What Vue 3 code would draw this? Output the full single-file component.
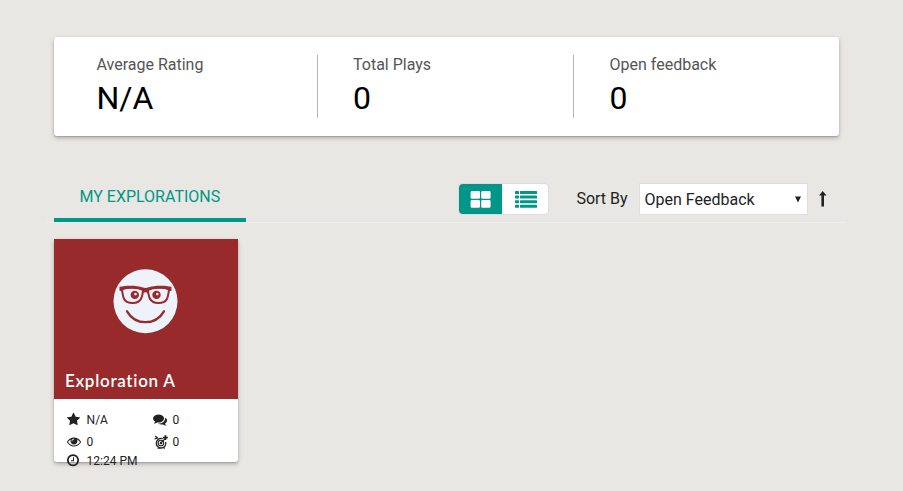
<script setup>
const stats = [
  { label: 'Average Rating', value: 'N/A' },
  { label: 'Total Plays', value: '0' },
  { label: 'Open feedback', value: '0' },
]
</script>

<template>
  <main class="dashboard">
    <section class="stats">
      <div v-for="s in stats" :key="s.label" class="stat">
        <div class="stat-label">{{ s.label }}</div>
        <div class="stat-value">{{ s.value }}</div>
      </div>
    </section>

    <nav class="toolbar">
      <div class="tab">MY EXPLORATIONS</div>
      <div class="view-toggle">
        <button class="view active" aria-label="Card view">
          <svg width="21" height="17" viewBox="0 0 21 17" fill="currentColor">
            <rect x=".6" width="9.4" height="7.8" rx="1.4" />
            <rect x="11.2" width="9.4" height="7.8" rx="1.4" />
            <rect x=".6" y="9" width="9.4" height="7.8" rx="1.4" />
            <rect x="11.2" y="9" width="9.4" height="7.8" rx="1.4" />
          </svg>
        </button>
        <button class="view" aria-label="List view">
          <svg width="22" height="17" viewBox="0 0 22 17" fill="currentColor">
            <template v-for="n in 4" :key="n">
              <rect :y="(n - 1) * 4.6" width="4" height="3" rx=".6" />
              <rect x="5" :y="(n - 1) * 4.6" width="17" height="3" rx=".6" />
            </template>
          </svg>
        </button>
      </div>
      <span class="sort-label">Sort By</span>
      <div class="select">
        <span>Open Feedback</span>
        <svg width="6" height="7" viewBox="0 0 6 7"><path d="M0 .5h6L3 6.5z" fill="currentColor" /></svg>
      </div>
      <svg class="arrow" width="8" height="16" viewBox="0 0 8 16"><path d="M3.7 0L7.5 4.6H5V15.5H2.4V4.600H0z" fill="currentColor" /></svg>
    </nav>

    <article class="card">
      <header class="cover">
        <svg class="face" width="64" height="64" viewBox="-.5 -.3 64 64">
          <circle cx="32" cy="32" r="32" fill="#eef3fb" />
          <g fill="none" stroke="#992a2b">
            <path d="M13.5 42C22 56.5 42 56.5 50.5 42" stroke-width="2.3" stroke-linecap="round" />
            <path d="M8.5 20C14 17.8 24 18 29.5 20.5C29 28 27.5 33.5 19.5 33.7C10.5 34 9.5 29 8.5 20Z" stroke-width="2" />
            <path d="M55.5 20C50 17.8 40 18 34.5 20.5C35 28 36.5 33.5 44.5 33.7C53.5 34 54.5 29 55.5 20Z" stroke-width="2" />
          </g>
          <path d="M6 17.5C13 15.8 24 16 29.5 18.2Q32 19 34.5 18.2C40 16 51 15.8 58 17.5V21.5L56 22L54.5 20.3C48 18.3 40 18.5 35.5 21L34.5 24Q32 22 29.5 24L28.5 21C24 18.5 16 18.3 9.5 20.3L8 22L6 21.5Z" fill="#992a2b" />
          <g fill="#992a2b"><circle cx="21.3" cy="25.6" r="4.2" /><circle cx="43" cy="25.6" r="4.2" /></g>
          <g fill="#eef3fb"><circle cx="22" cy="24.8" r="1.3" /><circle cx="43.8" cy="24.8" r="1.3" /></g>
        </svg>
        <h3>Exploration A</h3>
      </header>
      <div class="metrics">
        <div class="metric">
          <svg class="icon" viewBox="64 64 1792 1792"><path d="M1728 647q0 22-26 48l-363 354 86 500q1 7 1 20 0 21-10.500 35.500t-30.500 14.500q-19 0-40-12l-449-236-449 236q-22 12-40 12-21 0-31.500-14.500t-10.500-35.500q0-6 2-20l86-500-364-354q-25-27-25-48 0-37 56-46l502-73 225-455q19-41 49-41t49 41l225 455 502 73q56 9 56 46z" /></svg>
          <span>N/A</span>
        </div>
        <div class="metric">
          <svg class="icon" viewBox="0 64 1792 1792"><path d="M1408 768q0 139-94 257t-256.500 186.500-353.500 68.500q-86 0-176-16-124 88-278 128-36 9-86 16h-3q-11 0-20.500-8t-11.500-21q-1-10 3-19l14-20 12-14 49-55 48-68 20-44q-124-72-195-177t-71-224q0-139 94-257t256.500-186.500 353.500-68.500 353.500 68.500 256.500 186.500 94 257zm384 256q0 120-71 224.500t-195 176.500l20 44 48 68 49 55 12 14 14 20 3 19q-3 14-13 22t-22 7q-50-7-86-16-154-40-278-128-90 16-176 16-271 0-472-132 58 4 88 4 161 0 309-45t264-129q125-92 192-212t67-254q0-77-23-152 129 71 204 178t75 230z" /></svg>
          <span>0</span>
        </div>
        <div class="metric">
          <svg class="icon" viewBox="0 64 1792 1792"><path d="M1664 960q-152-236-381-353 61 104 61 225 0 185-131.500 316.500t-316.500 131.500-316.500-131.500-131.500-316.500q0-121 61-225-229 117-381 353 133 205 333.500 326.500t434.500 121.500 434.500-121.500 333.500-326.500zm-720-384q0-20-14-34t-34-14q-125 0-214.500 89.500t-89.500 214.500q0 20 14 34t34 14 34-14 14-34q0-86 61-147t147-61q20 0 34-14t14-34zm848 384q0 34-20 69-140 230-376.500 368.500t-499.500 138.500-499.500-139-376.500-368q-20-35-20-69t20-69q140-229 376.500-368t499.500-139 499.500 139 376.500 368q20 35 20 69z" /></svg>
          <span>0</span>
        </div>
        <div class="metric">
          <svg class="icon" viewBox="-.7 0 14 14">
            <g fill="none" stroke="currentColor">
              <path d="M9 3.7A4.8 4.8 0 1 0 12 7M.8 4L4.2 2.8M1.5 1L4 3.2M5 12.5L4 13.5M10 12.5L11 13.5" stroke-width="1.3" />
              <circle cx="7.2" cy="8" r="2.8" stroke-width="1.1" />
              <path d="M7.2 8L12 3.2" stroke-width="1.2" />
              <path d="M11.7 .3V5.1M9.3 2.7H14.1" stroke-width="1.8" />
            </g>
            <circle cx="7.2" cy="8" r="1.3" />
          </svg>
          <span>0</span>
        </div>
        <div class="metric wide">
          <svg class="icon" viewBox="128 96 1792 1792"><path d="M1024 544v448q0 14-9 23t-23 9h-320q-14 0-23-9t-9-23v-64q0-14 9-23t23-9h224v-352q0-14 9-23t23-9h64q14 0 23 9t9 23zm416 352q0-148-73-273t-198-198-273-73-273 73-198 198-73 273 73 273 198 198 273 73 273-73 198-198 73-273zm224 0q0 209-103 385.500t-279.500 279.500-385.500 103-385.500-103-279.500-279.500-103-385.500 103-385.500 279.500-279.500 385.500-103 385.500 103 279.500 279.500 103 385.500z" /></svg>
          <span>12:24 PM</span>
        </div>
      </div>
    </article>
  </main>
</template>

<style>
body {
  margin: 0;
  background: #e8e7e3;
}
</style>

<style scoped>
* {
  box-sizing: border-box;
}
.dashboard {
  width: 903px;
  height: 491px;
  padding: 37px 56px 0 46px;
  overflow: hidden;
  background: #e8e7e3;
  color: #222;
  font-family: Roboto, sans-serif;
  font-size: 16px;
}
.stats {
  display: flex;
  width: 785px;
  height: 99px;
  margin-left: 8px;
  padding: 18px 0 18px 7px;
  border-radius: 3px;
  background: #fff;
  box-shadow: 0 2px 4px rgba(0, 0, 0, 0.26), 0 1px 1px rgba(0, 0, 0, 0.12);
}
.stat {
  width: 256.5px;
  padding-left: 35.5px;
}
.stat:not(:last-child) {
  border-right: 1px solid #b5b5b5;
}
.stat-label {
  height: 20px;
  line-height: 19px;
  color: #555;
}
.stat-value {
  font-size: 32px;
  line-height: 46px;
  color: #000;
}
.toolbar {
  display: flex;
  width: 800px;
  height: 51px;
  margin-top: 36px;
  padding-left: 8px;
  border-bottom: 1px solid #eeeef0;
}
.tab {
  width: 192px;
  height: 50px;
  padding-right: 0.3px;
  border-bottom: 4px solid #009688;
  color: #009688;
  text-align: center;
  line-height: 49px;
}
.view-toggle {
  display: flex;
  width: 91px;
  height: 32px;
  margin: 11px 0 0 212px;
  border: 1px solid #ddd;
  border-radius: 5px;
  overflow: hidden;
}
.view {
  display: flex;
  flex: 1;
  align-items: center;
  justify-content: center;
  padding: 0 0 0 1px;
  border: 0;
  background: #fff;
  color: #009688;
}
.view.active {
  flex: 0 0 44px;
  margin: 0 0 0 -1px;
  padding: 0;
  background: #009688;
  color: #fff;
}
.sort-label {
  width: 62.6px;
  margin-left: 27.4px;
  line-height: 53px;
}
.select {
  display: flex;
  align-items: center;
  justify-content: space-between;
  width: 169px;
  height: 32px;
  margin-top: 11px;
  padding: 0 6px 0 4.6px;
  border: 1px solid #ddd;
  background: #fff;
}
.arrow {
  margin: 19px 0 0 11px;
}
.card {
  width: 184px;
  height: 223px;
  margin: 16px 0 0 8px;
  border-radius: 0 0 3px 3px;
  background: #fff;
  box-shadow: 0 2px 4px rgba(0, 0, 0, 0.26), 0 1px 1px rgba(0, 0, 0, 0.12);
}
.cover {
  display: flex;
  flex-direction: column;
  justify-content: space-between;
  height: 160px;
  padding: 30px 11px 6px;
  background: #992a2b;
}
.face {
  margin-left: 48px;
  overflow: visible;
}
h3 {
  margin: 0;
  color: #fff;
  font: 600 17px/24px Lato, sans-serif;
  letter-spacing: 0.7px;
}
.metrics {
  display: grid;
  grid-template-columns: 86px 86px;
  grid-template-rows: 22px 21px 18px;
  padding: 10px 0 0 13px;
  font-size: 12px;
}
.metric {
  display: flex;
  align-items: center;
  gap: 5.6px;
}
.wide {
  grid-column: 1 / -1;
}
.icon {
  width: 14px;
  height: 14px;
  fill: currentColor;
  overflow: visible;
}
</style>
